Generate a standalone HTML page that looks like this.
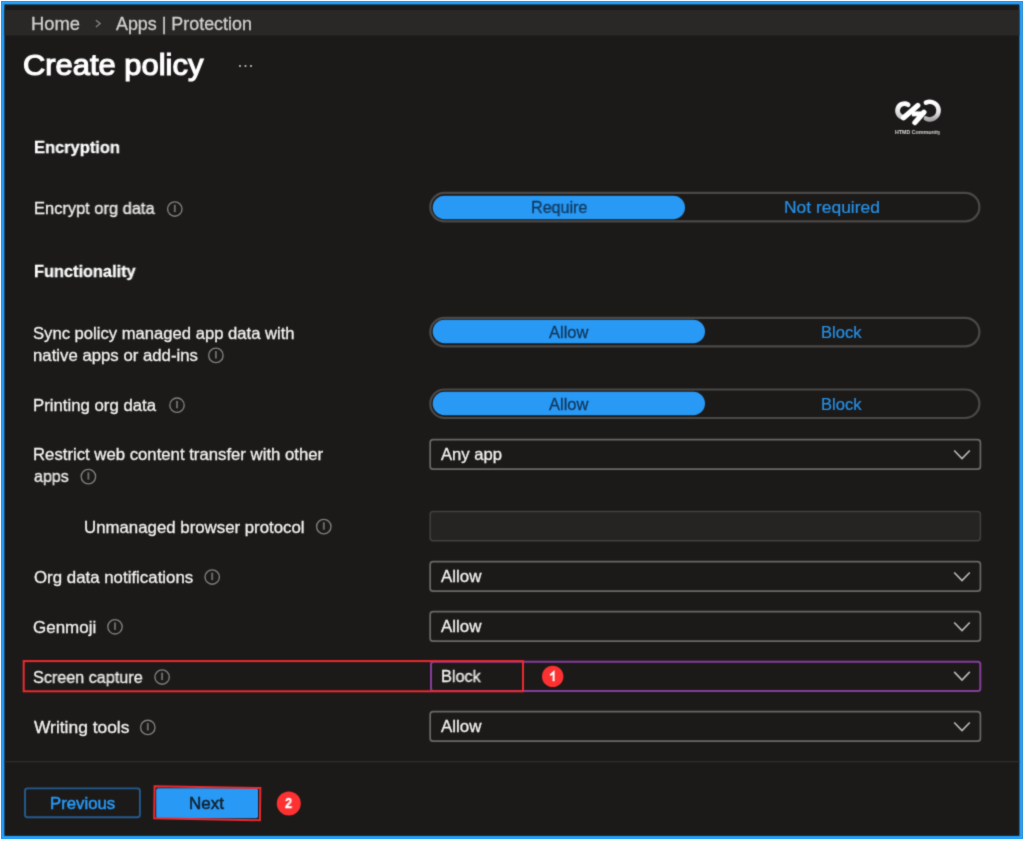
<!DOCTYPE html>
<html><head><meta charset="utf-8"><title>Create policy</title>
<style>
html,body{margin:0;padding:0;background:#f4faff}
body{width:1024px;height:841px;overflow:hidden;position:relative;background:#f4faff;font-family:"Liberation Sans",sans-serif}
.a{position:absolute}
.t{position:absolute;white-space:pre;line-height:1;transform-origin:0 0;will-change:transform}

#w{position:absolute;left:0;top:0;width:1024px;height:841px;overflow:hidden;filter:url(#bl)}
</style></head><body>
<svg width="0" height="0" style="position:absolute"><filter id="bl" x="0" y="0" width="100%" height="100%" color-interpolation-filters="sRGB"><feConvolveMatrix order="3" kernelMatrix="0.0225 0.1050 0.0225 0.1050 0.4900 0.1050 0.0225 0.1050 0.0225" edgeMode="duplicate" preserveAlpha="true"/></filter></svg>
<div id="w">
<svg class="a" style="left:0;top:0" width="1024" height="841" viewBox="0 0 1024 841">
<rect x="1.1" y="1.1" width="1021.8" height="838" fill="#27a0fb"/>
<rect x="4.35" y="4.4" width="1015.1" height="831.5" fill="#1b1a19"/>
<rect x="4.35" y="10" width="1015.1" height="25.4" fill="#292827"/>
<path d="M95.9 20.2 L100.1 23.6 L95.9 27" fill="none" stroke="#8f8d8b" stroke-width="1.2"/>
<circle cx="240" cy="66" r="1.05" fill="#c8c6c4"/>
<circle cx="245.5" cy="66" r="1.05" fill="#c8c6c4"/>
<circle cx="251" cy="66" r="1.05" fill="#c8c6c4"/>
<rect x="430.3" y="192.80" width="549.1" height="28.5" rx="14.25" fill="none" stroke="#4b4947" stroke-width="2.2"/>
<rect x="432.7" y="195.7" width="252.3" height="23.5" rx="11.75" fill="#2899f5"/>
<rect x="430.3" y="317.80" width="549.1" height="28.5" rx="14.25" fill="none" stroke="#4b4947" stroke-width="2.2"/>
<rect x="432.7" y="319.7" width="272.3" height="23.5" rx="11.75" fill="#2899f5"/>
<rect x="430.3" y="389.50" width="549.1" height="28.5" rx="14.25" fill="none" stroke="#4b4947" stroke-width="2.2"/>
<rect x="432.7" y="391.7" width="272.3" height="23.5" rx="11.75" fill="#2899f5"/>
<rect x="430.15" y="439.65" width="550.25" height="29.55" rx="3" fill="none" stroke="#6b6967" stroke-width="1.7"/>
<path d="M954.2 450.5 L962 458.6 L969.8 450.5" fill="none" stroke="#bdbbb9" stroke-width="1.6"/>
<rect x="430.15" y="511.4" width="550.25" height="29.4" rx="3" fill="#252423" stroke="#434140" stroke-width="1.5"/>
<rect x="430.15" y="561.65" width="550.25" height="29.55" rx="3" fill="none" stroke="#6b6967" stroke-width="1.7"/>
<path d="M954.2 572.5 L962 580.6 L969.8 572.5" fill="none" stroke="#bdbbb9" stroke-width="1.6"/>
<rect x="430.15" y="611.65" width="550.25" height="29.55" rx="3" fill="none" stroke="#6b6967" stroke-width="1.7"/>
<path d="M954.2 622.5 L962 630.6 L969.8 622.5" fill="none" stroke="#bdbbb9" stroke-width="1.6"/>
<rect x="431" y="661.6999999999999" width="549.3" height="29.4" rx="2.5" fill="none" stroke="#873d9a" stroke-width="2"/>
<path d="M954.2 671.9 L962 680.0 L969.8 671.9" fill="none" stroke="#bdbbb9" stroke-width="1.6"/>
<rect x="430.15" y="711.65" width="550.25" height="29.55" rx="3" fill="none" stroke="#6b6967" stroke-width="1.7"/>
<path d="M954.2 722.5 L962 730.6 L969.8 722.5" fill="none" stroke="#bdbbb9" stroke-width="1.6"/>
<circle cx="174.8" cy="209" r="7.2" fill="none" stroke="#838180" stroke-width="1.35"/>
<rect x="173.85" y="204.70" width="1.9" height="7.4" fill="#6e6c6a"/>
<circle cx="215.9" cy="355.4" r="7.2" fill="none" stroke="#838180" stroke-width="1.35"/>
<rect x="214.95" y="351.10" width="1.9" height="7.4" fill="#6e6c6a"/>
<circle cx="177" cy="405.2" r="7.2" fill="none" stroke="#838180" stroke-width="1.35"/>
<rect x="176.05" y="400.90" width="1.9" height="7.4" fill="#6e6c6a"/>
<circle cx="88.4" cy="476.6" r="7.2" fill="none" stroke="#838180" stroke-width="1.35"/>
<rect x="87.45" y="472.30" width="1.9" height="7.4" fill="#6e6c6a"/>
<circle cx="323.8" cy="526.6" r="7.2" fill="none" stroke="#838180" stroke-width="1.35"/>
<rect x="322.85" y="522.30" width="1.9" height="7.4" fill="#6e6c6a"/>
<circle cx="212.2" cy="577" r="7.2" fill="none" stroke="#838180" stroke-width="1.35"/>
<rect x="211.25" y="572.70" width="1.9" height="7.4" fill="#6e6c6a"/>
<circle cx="115" cy="626.8" r="7.2" fill="none" stroke="#838180" stroke-width="1.35"/>
<rect x="114.05" y="622.50" width="1.9" height="7.4" fill="#6e6c6a"/>
<circle cx="162.1" cy="677" r="7.2" fill="none" stroke="#838180" stroke-width="1.35"/>
<rect x="161.15" y="672.70" width="1.9" height="7.4" fill="#6e6c6a"/>
<circle cx="147.8" cy="727.4" r="7.2" fill="none" stroke="#838180" stroke-width="1.35"/>
<rect x="146.85" y="723.10" width="1.9" height="7.4" fill="#6e6c6a"/>
<rect x="23.7" y="661.1" width="499.3" height="30.2" fill="none" stroke="#ee2a2f" stroke-width="2"/>
<circle cx="552.7" cy="676.4" r="10.7" fill="#fd3131"/>
<circle cx="288.8" cy="803.5" r="12" fill="#fd3131"/>
<path d="M550.2 675.2 L553.6 672.2 L553.6 681.2" fill="none" stroke="#ffffff" stroke-width="2"/>
<rect x="4.35" y="761" width="1015.1" height="1.3" fill="#2e2d2c"/>
<rect x="25" y="788.4" width="114.9" height="28.9" rx="2.5" fill="none" stroke="#245b8f" stroke-width="1.9"/>
<rect x="156.2" y="788.2" width="101.8" height="30" rx="2" fill="#2899f5"/>
<path d="M154.6 786.2 L260.3 788 L259.9 820.2 L154.2 818.2 Z" fill="none" stroke="#ee2a2f" stroke-width="2"/>
</svg>
<svg class="a" style="left:890px;top:95px" width="56" height="35" viewBox="0 0 1024 640">
<defs>
<linearGradient id="g1" x1="0" y1="0" x2="0" y2="1"><stop offset="0" stop-color="#ffffff"/><stop offset="1" stop-color="#c9c9c9"/></linearGradient>
<linearGradient id="g2" x1="0" y1="0" x2="0" y2="1"><stop offset="0" stop-color="#ffffff"/><stop offset="0.6" stop-color="#e4e4e4"/><stop offset="1" stop-color="#a8a8a8"/></linearGradient>
</defs>
<path d="M331 178 A126 126 0 1 0 242 409" fill="none" stroke="url(#g1)" stroke-width="88" stroke-linecap="round"/>
<path d="M657 140 A161 161 0 1 1 657 430" fill="none" stroke="url(#g2)" stroke-width="84" stroke-linecap="round"/>
<path d="M248 416 L508 192" fill="none" stroke="#ffffff" stroke-width="96" stroke-linecap="round"/>
<path d="M455 505 L620 315" fill="none" stroke="#ffffff" stroke-width="96" stroke-linecap="round"/>
<path d="M400 345 L570 345" fill="none" stroke="#ffffff" stroke-width="90"/>
</svg>
<span class="t" style="left:31.0px;top:16px;font-size:17.8px;font-weight:400;color:#d2d0ce;-webkit-text-stroke:0.3px #d2d0ce;transform:scaleX(1.0326)">Home</span>
<span class="t" style="left:115.8px;top:16px;font-size:17.8px;font-weight:400;color:#d2d0ce;-webkit-text-stroke:0.3px #d2d0ce;transform:scaleX(1.0056)">Apps | Protection</span>
<span class="t" style="left:23.4px;top:51px;font-size:29.2px;font-weight:400;color:#ffffff;-webkit-text-stroke:1.2px #ffffff;transform:scaleX(1.0588)">Create policy</span>
<span class="t" style="left:33.5px;top:140px;font-size:16.8px;font-weight:700;color:#ffffff;-webkit-text-stroke:0.3px #ffffff;transform:scaleX(0.9797)">Encryption</span>
<span class="t" style="left:33.5px;top:200px;font-size:16.5px;font-weight:400;color:#f3f2f1;-webkit-text-stroke:0.3px #f3f2f1;transform:scaleX(0.9959)">Encrypt org data</span>
<span class="t" style="left:33.5px;top:264px;font-size:16.8px;font-weight:700;color:#ffffff;-webkit-text-stroke:0.3px #ffffff;transform:scaleX(0.9736)">Functionality</span>
<span class="t" style="left:33.0px;top:325px;font-size:16.5px;font-weight:400;color:#f3f2f1;-webkit-text-stroke:0.3px #f3f2f1;transform:scaleX(1.0078)">Sync policy managed app data with</span>
<span class="t" style="left:33.0px;top:347px;font-size:16.5px;font-weight:400;color:#f3f2f1;-webkit-text-stroke:0.3px #f3f2f1;transform:scaleX(1.0161)">native apps or add-ins</span>
<span class="t" style="left:33.0px;top:397px;font-size:16.5px;font-weight:400;color:#f3f2f1;-webkit-text-stroke:0.3px #f3f2f1;transform:scaleX(1.0165)">Printing org data</span>
<span class="t" style="left:33.0px;top:446px;font-size:16.5px;font-weight:400;color:#f3f2f1;-webkit-text-stroke:0.3px #f3f2f1;transform:scaleX(1.0140)">Restrict web content transfer with other</span>
<span class="t" style="left:34.0px;top:468px;font-size:16.5px;font-weight:400;color:#f3f2f1;-webkit-text-stroke:0.3px #f3f2f1;transform:scaleX(0.9722)">apps</span>
<span class="t" style="left:84.4px;top:519px;font-size:16.5px;font-weight:400;color:#f3f2f1;-webkit-text-stroke:0.3px #f3f2f1;transform:scaleX(1.0191)">Unmanaged browser protocol</span>
<span class="t" style="left:34.0px;top:569px;font-size:16.5px;font-weight:400;color:#f3f2f1;-webkit-text-stroke:0.3px #f3f2f1;transform:scaleX(1.0212)">Org data notifications</span>
<span class="t" style="left:33.0px;top:619px;font-size:16.5px;font-weight:400;color:#f3f2f1;-webkit-text-stroke:0.3px #f3f2f1;transform:scaleX(1.0283)">Genmoji</span>
<span class="t" style="left:33.0px;top:669px;font-size:16.5px;font-weight:400;color:#f3f2f1;-webkit-text-stroke:0.3px #f3f2f1;transform:scaleX(0.9802)">Screen capture</span>
<span class="t" style="left:34.0px;top:719px;font-size:16.5px;font-weight:400;color:#f3f2f1;-webkit-text-stroke:0.3px #f3f2f1;transform:scaleX(1.0544)">Writing tools</span>
<span class="t" style="left:530.7px;top:199px;font-size:16.5px;font-weight:400;color:#12385c;-webkit-text-stroke:0.3px #12385c;transform:scaleX(0.9768)">Require</span>
<span class="t" style="left:783.9px;top:199px;font-size:16.5px;font-weight:400;color:#2691e8;-webkit-text-stroke:0.2px #2691e8;transform:scaleX(1.0562)">Not required</span>
<span class="t" style="left:548.8px;top:324px;font-size:16.5px;font-weight:400;color:#12385c;-webkit-text-stroke:0.3px #12385c;transform:scaleX(1.0000)">Allow</span>
<span class="t" style="left:821.4px;top:324px;font-size:16.5px;font-weight:400;color:#2691e8;-webkit-text-stroke:0.2px #2691e8;transform:scaleX(1.0026)">Block</span>
<span class="t" style="left:548.8px;top:396px;font-size:16.5px;font-weight:400;color:#12385c;-webkit-text-stroke:0.3px #12385c;transform:scaleX(1.0000)">Allow</span>
<span class="t" style="left:821.4px;top:396px;font-size:16.5px;font-weight:400;color:#2691e8;-webkit-text-stroke:0.2px #2691e8;transform:scaleX(1.0026)">Block</span>
<span class="t" style="left:441.0px;top:446px;font-size:16.5px;font-weight:400;color:#f3f2f1;-webkit-text-stroke:0.3px #f3f2f1;transform:scaleX(1.0083)">Any app</span>
<span class="t" style="left:441.0px;top:568px;font-size:16.5px;font-weight:400;color:#f3f2f1;-webkit-text-stroke:0.3px #f3f2f1;transform:scaleX(1.0250)">Allow</span>
<span class="t" style="left:441.0px;top:618px;font-size:16.5px;font-weight:400;color:#f3f2f1;-webkit-text-stroke:0.3px #f3f2f1;transform:scaleX(1.0250)">Allow</span>
<span class="t" style="left:440.6px;top:668px;font-size:16.5px;font-weight:400;color:#f3f2f1;-webkit-text-stroke:0.3px #f3f2f1;transform:scaleX(0.9846)">Block</span>
<span class="t" style="left:441.0px;top:718px;font-size:16.5px;font-weight:400;color:#f3f2f1;-webkit-text-stroke:0.3px #f3f2f1;transform:scaleX(1.0250)">Allow</span>
<span class="t" style="left:50.0px;top:796px;font-size:16.6px;font-weight:400;color:#2899f5;-webkit-text-stroke:0.5px #2899f5;transform:scaleX(1.0095)">Previous</span>
<span class="t" style="left:188.8px;top:796px;font-size:16.6px;font-weight:400;color:#15202b;-webkit-text-stroke:0.5px #15202b;transform:scaleX(1.0235)">Next</span>
<span class="t" style="left:285.2px;top:797px;font-size:13.8px;font-weight:700;color:#ffffff;-webkit-text-stroke:0.3px #ffffff;transform:scaleX(0.9250)">2</span>
<span class="t" style="left:894.8px;top:130px;font-size:5.3px;font-weight:700;color:#dcdcdc;transform:scaleX(0.9891)">HTMD Community</span>
</div></body></html>
